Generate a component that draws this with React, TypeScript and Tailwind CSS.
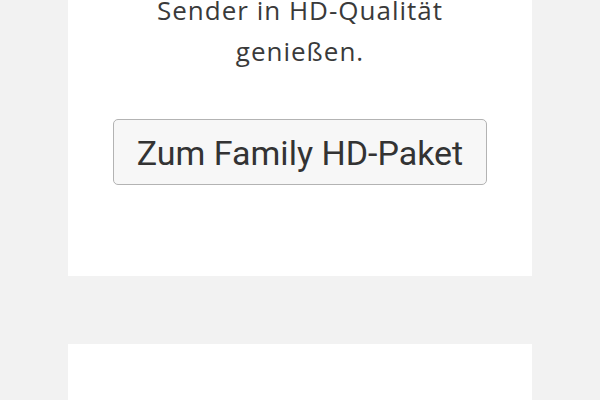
import React from "react";

export default function App() {
  return (
    <div className="w-[600px] overflow-hidden bg-[#f2f2f2]" style={{ height: 400 }}>
      <div className="mx-auto flex w-[464px] flex-col items-center bg-white pb-[91px]">
        <p className="mt-[-10px] text-center text-[26px] leading-[41px] tracking-[1px] text-[#3a3a3a] [font-family:'Open_Sans',sans-serif]">
          Sender in HD-Qualität
          <br />
          genießen.
        </p>
        <button className="mt-[47px] flex h-[66px] w-[374px] items-center justify-center rounded-[5px] border border-[#b3b3b3] bg-[#f7f7f7] pt-[3px] text-[34px] text-[#333] [font-family:Roboto,sans-serif]">
          Zum Family HD-Paket
        </button>
      </div>
      <div className="mx-auto mt-[68px] h-[100px] w-[464px] bg-white" />
    </div>
  );
}
